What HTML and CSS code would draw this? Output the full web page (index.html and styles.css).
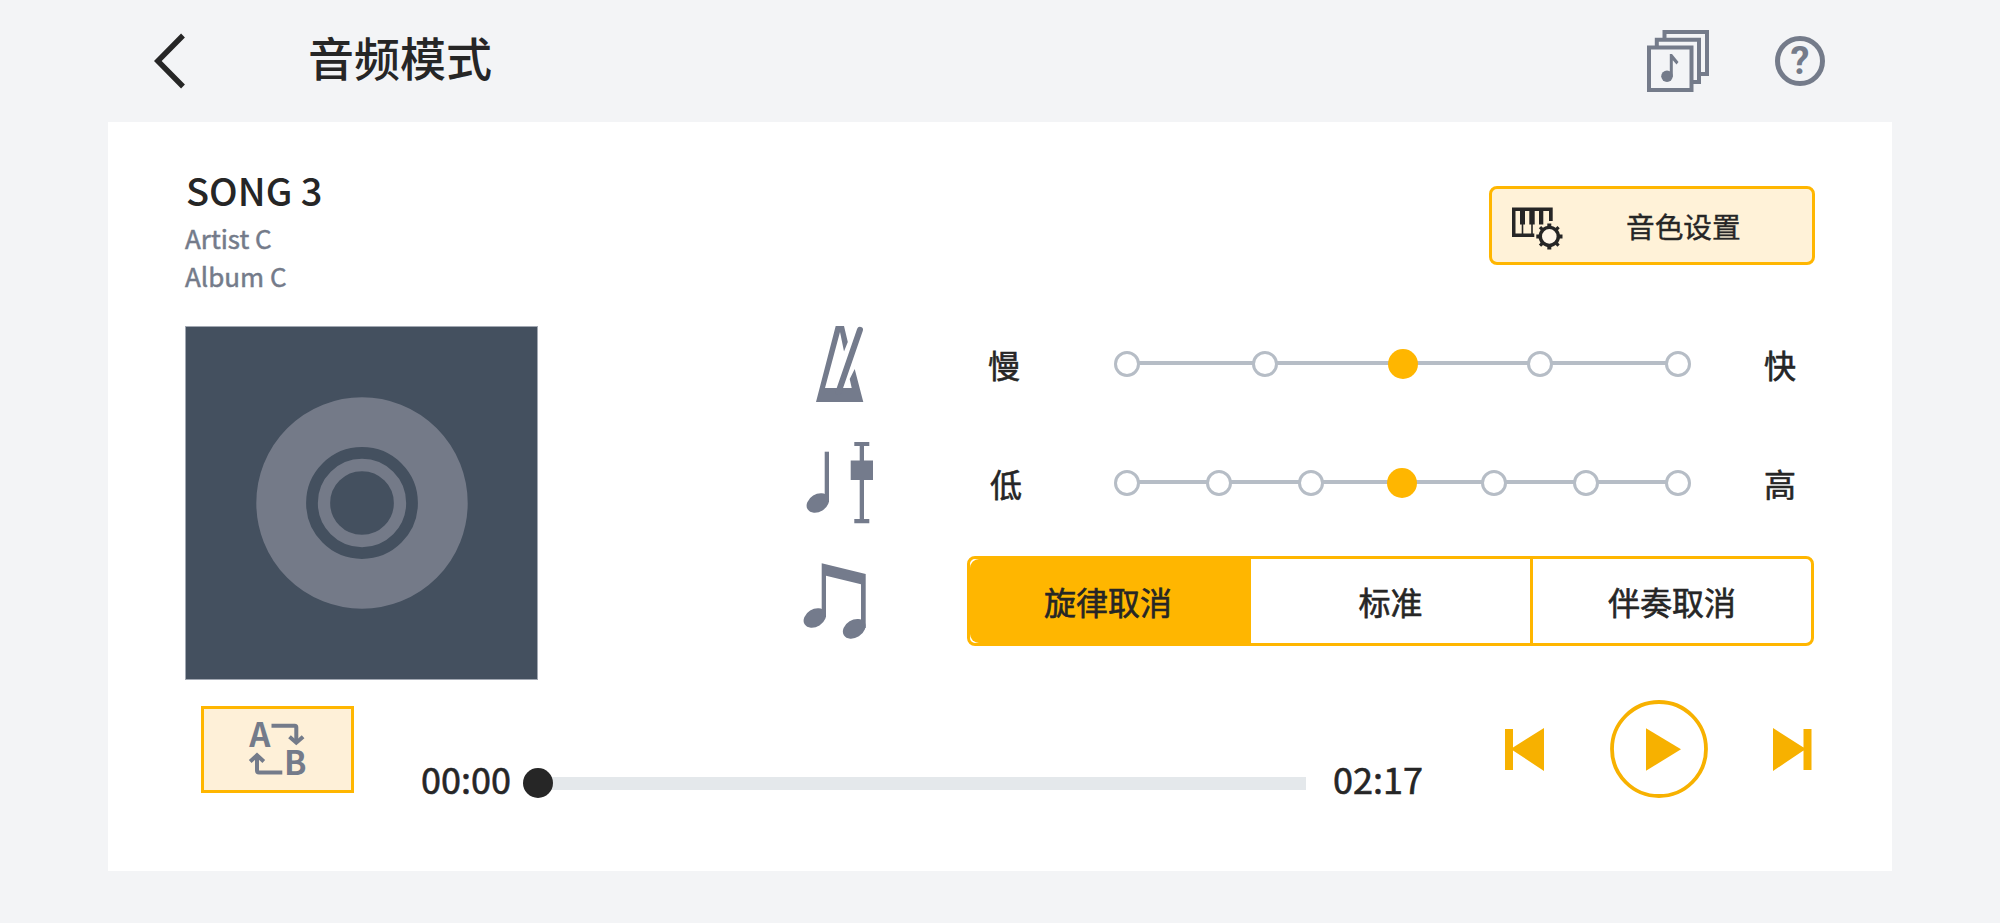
FILE: index.html
```html
<!DOCTYPE html>
<html lang="zh-CN">
<head>
    <meta charset="UTF-8">
    <meta name="viewport" content="width=device-width, initial-scale=1.0">
    <title>音频模式</title>
    <link rel="stylesheet" href="styles.css">
</head>
<body>
    <header>
        <a class="back" href="#">
            <svg width="32" height="54" viewBox="0 0 32 54"><path d="M29 1.5 3.8 27 29 52.5" fill="none" stroke="#262626" stroke-width="5.4"/></svg>
        </a>
        <h1>音频模式</h1>
        <div class="header-icons">
            <svg width="62" height="62" viewBox="0 0 62 62" fill="none" stroke="#747b8a" stroke-width="4">
                <path d="M17.5 8V2H60V44H52"/>
                <path d="M9.8 16V9.8H52V52H45"/>
                <rect x="2" y="17.5" width="42.5" height="42.5"/>
                <g stroke="none" fill="#747b8a">
                    <ellipse cx="20" cy="46.3" rx="5.8" ry="5.7"/>
                    <path d="M22.8 24H25L31.5 32 29.5 34.5 25.8 30.3V46.5H22.8Z"/>
                </g>
            </svg>
            <span class="help">?</span>
        </div>
    </header>
    <main class="card">
        <section class="top">
            <div class="song-info">
                <h2>SONG 3</h2>
                <p>Artist C</p>
                <p>Album C</p>
            </div>
            <button class="tone-btn">
                <svg width="54" height="46" viewBox="0 0 54 46" fill="#262626">
                    <path d="M2 1.5H42.7V15H39V5H33.3V18.5H29V5H24.7V18.5H19.3V5H15V18.5H10V5H5.5V27.5H24.3V31H2Z"/>
                    <path d="M11.7 18H13.3V28H11.7ZM21.2 18H22.8V28H21.2Z"/>
                    <circle cx="39.3" cy="30.4" r="9" fill="#fff6e8" stroke="#262626" stroke-width="3.4"/>
                    <g stroke="#262626" stroke-width="4">
                        <path d="M39.3 17.5V21M39.3 40V43.6M26.3 30.4H30M48.7 30.4H52.5"/>
                        <path stroke-width="3.2" d="M30 21.2 32.7 23.9M46 37 48.6 39.7M30 39.7 32.7 37M46 23.9 48.6 21.2"/>
                    </g>
                </svg>
                <span>音色设置</span>
            </button>
        </section>
        <section class="middle">
            <div class="album-art">
                <svg width="212" height="212" viewBox="0 0 212 212" fill="none" stroke="#747a88">
                    <circle cx="106" cy="106" r="80.8" stroke-width="49.8"/>
                    <circle cx="106" cy="106" r="38" stroke-width="12.3"/>
                </svg>
            </div>
            <div class="settings">
                <div class="row tempo">
                    <svg width="72" height="76" viewBox="0 0 72 76" fill="#747b8c">
                        <path d="M13 76 32.7 0H41L44.8 16 41 25.5 37 6 22 62H48.7L46.7 53 51.7 43 60.3 76Z"/>
                        <path d="M57 3.8 35.5 66" stroke="#747b8c" stroke-width="6" stroke-linecap="round"/>
                    </svg>
                    <span class="label">慢</span>
                    <div class="steps">
                        <i class="dot"></i><i class="dot"></i><i class="dot active"></i><i class="dot"></i><i class="dot"></i>
                    </div>
                    <span class="label">快</span>
                </div>
                <div class="row pitch">
                    <svg width="72" height="82" viewBox="0 0 72 82" fill="#747b8c">
                        <path d="M21.7 9.7H26V60H21.7Z"/>
                        <ellipse cx="14.8" cy="61" rx="12" ry="8.8" transform="rotate(-32 14.8 61)"/>
                        <path d="M51.3 0H66.3V4H61V18.5H70V38H61V77H66.3V81.3H51.3V77H56.7V38H47.7V18.5H56.7V4H51.3Z"/>
                    </svg>
                    <span class="label">低</span>
                    <div class="steps">
                        <i class="dot"></i><i class="dot"></i><i class="dot"></i><i class="dot active"></i><i class="dot"></i><i class="dot"></i><i class="dot"></i>
                    </div>
                    <span class="label">高</span>
                </div>
                <div class="row cancel">
                    <svg width="72" height="76" viewBox="0 0 72 76" fill="#747b8c">
                        <path d="M18.7 .3 62.7 11V65H58V21.3L23 12.7V54H18.7Z"/>
                        <ellipse cx="11.8" cy="55" rx="12" ry="8.8" transform="rotate(-32 11.8 55)"/>
                        <ellipse cx="51.2" cy="65.8" rx="12.2" ry="8.8" transform="rotate(-32 51.2 65.8)"/>
                    </svg>
                    <div class="segments">
                        <button class="active">旋律取消</button>
                        <button>标准</button>
                        <button>伴奏取消</button>
                    </div>
                </div>
            </div>
        </section>
        <section class="player">
            <button class="ab-btn">
                <svg width="60" height="78" viewBox="0 -9 60 78" fill="none" stroke="#747b8a" stroke-width="4">
                    <path d="M23.5 6.7H46.7Q48.3 6.7 48.3 8.3V23"/>
                    <path d="M41.5 17.7 48.3 23.7 55.1 17.7"/>
                    <path d="M34.3 53.5H11Q9 53.5 9 51.5V37"/>
                    <path d="M2.2 42.5 9 36.3 15.8 42.5"/>
                    <text class="ab" x="1.2" y="28">A</text>
                    <text class="ab" x="36" y="55.5">B</text>
                </svg>
            </button>
            <div class="progress">
                <span class="time">00:00</span>
                <div class="bar"><i class="knob"></i></div>
                <span class="time">02:17</span>
            </div>
            <div class="controls">
                <svg width="39" height="43" viewBox="0 0 39 43" fill="#f7b100"><path d="M0 1H8V19.5L39 0V43L8 22.5V42H0Z"/></svg>
                <svg width="98" height="98" viewBox="0 0 98 98">
                    <circle cx="49" cy="49" r="47" fill="none" stroke="#f7b100" stroke-width="3.8"/>
                    <path d="M36 28.3 71 49.3 36 70.8Z" fill="#f7b100"/>
                </svg>
                <svg width="39" height="43" viewBox="0 0 39 43" fill="#f7b100"><path d="M0 0 30.5 19.5V1H38.5V42H30.5V22.5L0 43Z"/></svg>
            </div>
        </section>
    </main>
</body>
</html>
```
FILE: styles.css
```css
* {
    box-sizing: border-box;
}
body {
    margin: 0;
    height: 923px;
    background: #f3f4f6;
    color: #262626;
    font-family: 'Noto Sans CJK SC', 'Noto Sans', sans-serif;
    overflow: hidden;
}
h1, h2, p {
    margin: 0;
    font-weight: 500;
}
svg {
    display: block;
    flex: none;
    overflow: visible;
}
button {
    margin: 0;
    padding: 0;
    border: none;
    background: none;
    color: #262626;
    font-family: inherit;
    cursor: pointer;
}
/* Header */
header {
    display: flex;
    align-items: center;
    height: 122px;
    padding: 0 175px 0 154px;
}
header h1 {
    margin: 0 0 10px 122px;
    font-size: 46px;
    line-height: 60px;
}
.header-icons {
    display: flex;
    align-items: center;
    gap: 66px;
    margin-left: auto;
}
.help {
    width: 50px;
    height: 50px;
    border: 5px solid #747b8a;
    border-radius: 50%;
    color: #747b8a;
    font: 700 38px/41px Roboto, sans-serif;
    text-align: center;
}
/* Card */
.card {
    height: 749px;
    margin: 0 108px;
    padding: 0 77px;
    background: #fff;
}
.top {
    display: flex;
    justify-content: space-between;
    height: 204px;
}
.song-info {
    padding-top: 46px;
}
.song-info h2 {
    margin: 0 0 7px 1px;
    font-size: 38px;
    line-height: 44px;
}
.song-info p {
    color: #747b8a;
    font-size: 26px;
    font-weight: 400;
    line-height: 38px;
    -webkit-text-stroke: 0.5px;
}
.tone-btn {
    display: flex;
    align-items: center;
    width: 326px;
    height: 79px;
    margin-top: 64px;
    padding-left: 18px;
    border: 3px solid #ffb600;
    border-radius: 8px;
    background: #fff2d8;
}
.tone-btn svg {
    margin-top: 7px;
}
.tone-btn span {
    margin-left: 62px;
    font-size: 28.7px;
    line-height: 40px;
    -webkit-text-stroke: 0.4px;
}
.middle {
    display: flex;
    height: 354px;
}
.album-art {
    display: flex;
    align-items: center;
    justify-content: center;
    width: 353px;
    border: 1px solid #a2a8b2;
    background: #44505f;
}
/* Settings */
.settings {
    margin-left: 265px;
}
.row {
    display: flex;
    align-items: center;
}
.tempo {
    height: 76px;
}
.pitch {
    height: 82px;
    margin: 40px 0 32px;
}
.cancel {
    height: 90px;
}
.label {
    width: 32px;
    margin-left: 113px;
    font-size: 32px;
    line-height: 40px;
    -webkit-text-stroke: 0.6px;
}
.pitch .label {
    margin-left: 115px;
}
.steps {
    display: flex;
    align-items: center;
    justify-content: space-between;
    width: 577px;
    margin-left: 94px;
    background: linear-gradient(#b6bdc6, #b6bdc6) 8px 12px / 560px 4px no-repeat;
}
.pitch .steps {
    margin-left: 92px;
}
.steps + .label, .pitch .steps + .label {
    margin-left: 73px;
}
.dot {
    width: 26px;
    height: 26px;
    border: 3px solid #b6bdc6;
    border-radius: 50%;
    background: #fff;
}
.dot.active {
    width: 30px;
    height: 30px;
    margin: 0 -2px;
    border: none;
    background: #ffb600;
}
.segments {
    display: flex;
    width: 847px;
    height: 90px;
    margin-left: 92px;
    border: 3px solid #ffb600;
    border-radius: 8px;
}
.segments button {
    width: 279px;
    font-size: 32px;
    line-height: 40px;
    -webkit-text-stroke: 0.6px;
}
.segments button:last-child {
    width: 281px;
    border-left: 3px solid #ffb600;
}
.segments .active {
    width: 281px;
    padding-right: 5px;
    border-radius: 9px 0 0 9px;
    background: #ffb600;
}
/* Player */
.player {
    display: flex;
    align-items: center;
    height: 98px;
    margin-top: 20px;
    padding-left: 16px;
}
.ab-btn {
    display: flex;
    align-items: center;
    justify-content: center;
    width: 153px;
    height: 87px;
    border: 3px solid #ffb600;
    background: #fef0d8;
}
.ab {
    fill: #747b8a;
    stroke: none;
    font-size: 33px;
    font-weight: 700;
}
.progress {
    display: flex;
    align-items: center;
    margin: 58px 0 0 67px;
}
.time {
    width: 90px;
    font-size: 36px;
    line-height: 36px;
    white-space: nowrap;
    -webkit-text-stroke: 0.6px;
}
.bar {
    display: flex;
    align-items: center;
    width: 768px;
    height: 13px;
    margin: 10px 27px 0;
    background: #e4e8eb;
}
.knob {
    width: 30px;
    height: 30px;
    margin-left: -15px;
    border-radius: 50%;
    background: #262626;
}
.controls {
    display: flex;
    align-items: center;
    gap: 65.5px;
    margin-left: auto;
    margin-right: 3px;
}
```
